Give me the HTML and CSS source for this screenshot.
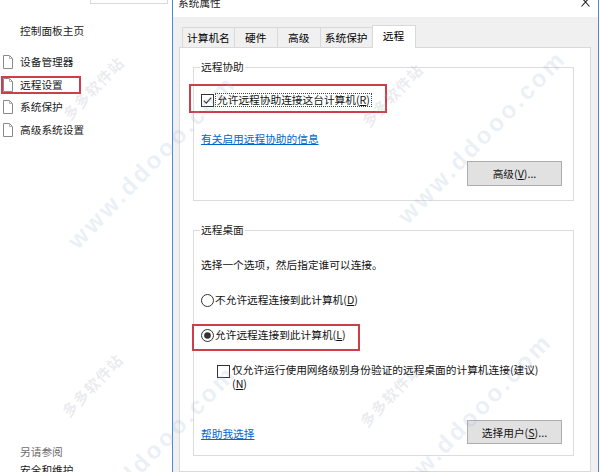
FILE: index.html
```html
<!DOCTYPE html>
<html lang="zh-CN">
<head>
    <meta charset="UTF-8">
    <meta name="viewport" content="width=device-width, initial-scale=1.0">
    <title>系统属性</title>
    <link rel="stylesheet" href="styles.css">
</head>
<body>
    <div class="screen">
        <aside class="sidebar">
            <div class="search"></div>
            <div class="home">控制面板主页</div>
            <ul class="tasks">
                <li><span class="task"><svg class="page" width="10" height="14" viewBox="0 0 10 14"><path d="M0.5 0.5H6.5L9.5 3.5V13.5H0.5Z" fill="#fff" stroke="#8a8a8a"/><path d="M6.5 0.5V3.5H9.5" fill="none" stroke="#b0b0b0"/></svg>设备管理器</span></li>
                <li><span class="task task-marked"><svg class="page" width="10" height="14" viewBox="0 0 10 14"><path d="M0.5 0.5H6.5L9.5 3.5V13.5H0.5Z" fill="#fff" stroke="#8a8a8a"/><path d="M6.5 0.5V3.5H9.5" fill="none" stroke="#b0b0b0"/></svg>远程设置</span></li>
                <li><span class="task"><svg class="page" width="10" height="14" viewBox="0 0 10 14"><path d="M0.5 0.5H6.5L9.5 3.5V13.5H0.5Z" fill="#fff" stroke="#8a8a8a"/><path d="M6.5 0.5V3.5H9.5" fill="none" stroke="#b0b0b0"/></svg>系统保护</span></li>
                <li><span class="task"><svg class="page" width="10" height="14" viewBox="0 0 10 14"><path d="M0.5 0.5H6.5L9.5 3.5V13.5H0.5Z" fill="#fff" stroke="#8a8a8a"/><path d="M6.5 0.5V3.5H9.5" fill="none" stroke="#b0b0b0"/></svg>高级系统设置</span></li>
            </ul>
            <div class="see-also">
                <div class="see-title">另请参阅</div>
                <div class="see-link">安全和维护</div>
            </div>
        </aside>

        <div class="window">
            <div class="titlebar">
                <span class="title">系统属性</span>
                <svg class="close" width="9" height="10" viewBox="0 0 9 10"><path d="M0.5 0.5L8.5 9.5M8.5 0.5L0.5 9.5" stroke="#222" stroke-width="1.1"/></svg>
            </div>
            <div class="tabs">
                <div class="tab">计算机名</div>
                <div class="tab">硬件</div>
                <div class="tab">高级</div>
                <div class="tab">系统保护</div>
                <div class="tab tab-active">远程</div>
            </div>
            <div class="panel">
                <fieldset class="group">
                    <legend>远程协助</legend>
                    <div class="mark mark-assist">
                        <div class="check-row">
                            <svg class="box" width="13" height="13" viewBox="0 0 13 13"><rect x="0.5" y="0.5" width="12" height="12" fill="#fff" stroke="#333"/><path d="M2.8 6.6L5.3 9.1L10.2 3.6" fill="none" stroke="#333" stroke-width="1.2"/></svg>
                            <span class="focus">允许远程协助连接这台计算机(<u>R</u>)</span>
                        </div>
                    </div>
                    <a class="link link-info" href="#">有关启用远程协助的信息</a>
                    <div class="btn-row">
                        <button class="btn" type="button">高级(<u>V</u>)...</button>
                    </div>
                </fieldset>

                <fieldset class="group">
                    <legend>远程桌面</legend>
                    <p class="hint">选择一个选项，然后指定谁可以连接。</p>
                    <div class="radio-row">
                        <svg class="box" width="13" height="13" viewBox="0 0 13 13"><circle cx="6.5" cy="6.5" r="6" fill="#fff" stroke="#333"/></svg>
                        <span>不允许远程连接到此计算机(<u>D</u>)</span>
                    </div>
                    <div class="mark mark-desktop">
                        <div class="radio-row">
                            <svg class="box" width="13" height="13" viewBox="0 0 13 13"><circle cx="6.5" cy="6.5" r="6" fill="#fff" stroke="#333"/><circle cx="6.5" cy="6.5" r="3.3" fill="#333"/></svg>
                            <span>允许远程连接到此计算机(<u>L</u>)</span>
                        </div>
                    </div>
                    <div class="nla-row">
                        <svg class="box" width="13" height="13" viewBox="0 0 13 13"><rect x="0.5" y="0.5" width="12" height="12" fill="#fff" stroke="#333"/></svg>
                        <span class="nla-text">仅允许运行使用网络级别身份验证的远程桌面的计算机连接(建议)(<u>N</u>)</span>
                    </div>
                    <div class="foot-row">
                        <a class="link link-help" href="#">帮助我选择</a>
                        <button class="btn btn-users" type="button">选择用户(<u>S</u>)...</button>
                    </div>
                </fieldset>
            </div>
        </div>
    </div>

    <div class="watermark">
        <span class="wm-url wm-1">www.ddooo.com</span>
        <span class="wm-url wm-2">www.ddooo.com</span>
        <span class="wm-url wm-3">www.ddooo.com</span>
        <span class="wm-url wm-4">www.ddooo.com</span>
        <span class="wm-name wm-5">多多软件站</span>
        <span class="wm-name wm-6">多多软件站</span>
        <span class="wm-name wm-7">多多软件站</span>
        <span class="wm-name wm-8">多多软件站</span>
    </div>
</body>
</html>
```

FILE: styles.css
```css
* {
    box-sizing: border-box;
}
body {
    position: relative;
    margin: 0;
    width: 600px;
    height: 472px;
    overflow: hidden;
    background: #fff;
    font-family: "Noto Sans CJK SC", "Noto Sans", sans-serif;
    font-size: 10.7px;
    color: #1a1a1a;
}
.screen {
    display: flex;
    height: 472px;
}

/* левая колонка панели управления */
.sidebar {
    width: 172px;
    flex: none;
    display: flex;
    flex-direction: column;
    overflow: hidden;
}
.search {
    width: 78px;
    height: 4px;
    margin-left: 90px;
    border: 1px solid #d9d9d9;
    border-top: none;
}
.home {
    margin-top: 19px;
    padding-left: 20px;
    line-height: 16px;
}
.tasks {
    list-style: none;
    margin: 12px 0 0;
    padding: 0;
}
.tasks li {
    height: 22.5px;
    display: flex;
    align-items: center;
    padding-left: 3px;
}
.task {
    display: inline-flex;
    align-items: center;
    gap: 7px;
    line-height: 16px;
}
.task-marked {
    height: 18px;
    margin-left: -2px;
    padding-right: 16px;
    border: 2px solid #cf3d4a;
}
.page {
    display: block;
}
.see-also {
    margin-top: auto;
    margin-bottom: -7px;
    padding-left: 20px;
    line-height: 18px;
}
.see-title {
    color: #6d6d6d;
}

/* окно "系统属性" */
.window {
    width: 427px;
    flex: none;
    display: flex;
    flex-direction: column;
    background: #f0f0f0;
    border-left: 1px solid #4a8ad4;
    border-right: 1px solid #4a8ad4;
    overflow: hidden;
}
.titlebar {
    height: 17px;
    flex: none;
    display: flex;
    justify-content: space-between;
    align-items: flex-start;
    padding: 0 8px 0 5px;
    background: #fff;
}
.title {
    margin-top: -5px;
    line-height: 16px;
}
.close {
    display: block;
    margin-top: -3px;
}
.tabs {
    height: 30px;
    flex: none;
    display: flex;
    align-items: flex-end;
    margin-left: 9px;
}
.tab {
    height: 20px;
    min-width: 44px;
    padding: 0 4px;
    margin-right: -1px;
    border: 1px solid #d9d9d9;
    border-bottom: none;
    background: #f0f0f0;
    line-height: 19px;
    text-align: center;
    color: #000;
}
.tab-active {
    position: relative;
    z-index: 1;
    height: 23px;
    margin-bottom: -1px;
    background: #fff;
}
.panel {
    flex: 1;
    margin: 0 7px 0 6px;
    padding: 0 16px 0 13px;
    background: #fff;
    border: 1px solid #d9d9d9;
}

.group {
    margin: 11px 0 0;
    padding: 0 11px 14px 7px;
    border: 1px solid #dcdcdc;
    min-width: 0;
}
.group + .group {
    margin-top: 21px;
    padding-bottom: 11px;
}
.group legend {
    padding: 0 1px;
    margin-left: -1px;
    line-height: 16px;
}

/* красные рамки-пометки */
.mark {
    display: flex;
    width: fit-content;
    border: 2px solid #cf3d4a;
}
.mark-assist {
    margin: 9px 0 -6px -12px;
    padding: 7px 13px 4px 10px;
}
.mark-desktop {
    margin: 16px 0 -8px -9px;
    padding: 1px 12px 6px 7px;
}

.check-row,
.radio-row {
    display: flex;
    align-items: center;
    gap: 1px;
    line-height: 16px;
    color: #111;
}
.box {
    display: block;
    flex: none;
}
.focus {
    border: 1px dotted #444;
    padding: 0 1px;
    line-height: 12px;
}
.link {
    display: block;
    width: fit-content;
    line-height: 16px;
    color: #0066cc;
    text-decoration: underline;
}
.link-info {
    margin-top: 24px;
}
.btn-row {
    display: flex;
    justify-content: flex-end;
    margin-top: 14px;
}
.btn {
    width: 95px;
    height: 25px;
    padding: 0;
    background: #e1e1e1;
    border: 1px solid #adadad;
    font: inherit;
    color: #111;
}
.btn-users {
    height: 24px;
}

.hint {
    margin: 19px 0 0;
    line-height: 16px;
    color: #111;
}
.group .radio-row {
    margin-top: 19px;
}
.group .mark .radio-row {
    margin-top: 0;
}
.nla-row {
    display: flex;
    align-items: flex-start;
    gap: 2px;
    margin: 20px 0 0 16px;
    color: #111;
}
.nla-row .box {
    margin-top: 2px;
}
.nla-text {
    max-width: 312px;
    line-height: 14px;
}
.foot-row {
    display: flex;
    justify-content: space-between;
    align-items: center;
    margin-top: 29px;
}
.link-help {
    padding-top: 4px;
}

/* водяной знак поверх скриншота */
.watermark {
    position: absolute;
    inset: 0;
    pointer-events: none;
    overflow: hidden;
}
.wm-url,
.wm-name {
    position: absolute;
    white-space: nowrap;
    font-weight: bold;
    transform: translate(-50%, -50%) rotate(-46deg);
}
.wm-url {
    font-family: "Liberation Sans", Arial, sans-serif;
    font-size: 24px;
    letter-spacing: 3px;
    color: rgba(150, 175, 210, 0.2);
}
.wm-name {
    font-family: "Noto Sans CJK SC", sans-serif;
    font-size: 15px;
    letter-spacing: 1px;
    color: rgba(160, 165, 180, 0.22);
}
.wm-1 { left: 152px; top: 162px; }
.wm-2 { left: 482px; top: 137px; }
.wm-3 { left: 468px; top: 420px; }
.wm-4 { left: 152px; top: 452px; }
.wm-5 { left: 93px;  top: 88px; }
.wm-6 { left: 392px; top: 95px; }
.wm-7 { left: 390px; top: 395px; }
.wm-8 { left: 92px;  top: 385px; }
```
